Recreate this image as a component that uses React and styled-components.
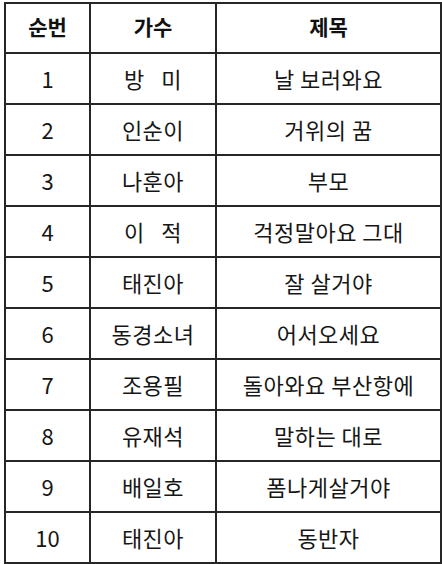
import React from "react";
import styled, { createGlobalStyle } from "styled-components";

const songs = [
  { no: 1, singer: "방   미", title: "날 보러와요" },
  { no: 2, singer: "인순이", title: "거위의 꿈" },
  { no: 3, singer: "나훈아", title: "부모" },
  { no: 4, singer: "이   적", title: "걱정말아요 그대" },
  { no: 5, singer: "태진아", title: "잘 살거야" },
  { no: 6, singer: "동경소녀", title: "어서오세요" },
  { no: 7, singer: "조용필", title: "돌아와요 부산항에" },
  { no: 8, singer: "유재석", title: "말하는 대로" },
  { no: 9, singer: "배일호", title: "폼나게살거야" },
  { no: 10, singer: "태진아", title: "동반자" },
];

const GlobalStyle = createGlobalStyle`
  html, body {
    margin: 0;
    padding: 0;
    background: #ffffff;
  }
  body {
    font-family: "Noto Sans CJK KR", "Noto Sans", sans-serif;
    color: #1a1a1a;
  }
`;

const Page = styled.div`
  padding: 2px 0 0 4px;
  height: 564px;
  overflow: hidden;
`;

const Table = styled.table`
  border-collapse: collapse;
  width: 436px;
  table-layout: fixed;
`;

const Col = styled.col`
  width: ${(p) => p.$w}px;
`;

const Head = styled.th`
  height: 44px;
  border: 2px solid #262626;
  font-size: 21px;
  line-height: 24px;
  font-weight: 700;
  text-align: center;
  vertical-align: middle;
  padding: 0 0 4px;
  color: #111;
`;

const Cell = styled.td`
  height: 47px;
  border: 2px solid #262626;
  font-size: 22px;
  line-height: 26px;
  font-weight: 400;
  text-align: center;
  vertical-align: middle;
  padding: 0 0 2px;
  white-space: pre;
  letter-spacing: ${(p) => (p.$num ? "0" : "0.5px")};
  color: #161616;
`;

export default function App() {
  return (
    <>
      <GlobalStyle />
      <Page>
        <Table>
          <colgroup>
            <Col $w={85} />
            <Col $w={126} />
            <Col $w={225} />
          </colgroup>
          <thead>
            <tr>
              <Head>순번</Head>
              <Head>가수</Head>
              <Head>제목</Head>
            </tr>
          </thead>
          <tbody>
            {songs.map((s) => (
              <tr key={s.no}>
                <Cell $num>{s.no}</Cell>
                <Cell>{s.singer}</Cell>
                <Cell>{s.title}</Cell>
              </tr>
            ))}
          </tbody>
        </Table>
      </Page>
    </>
  );
}
